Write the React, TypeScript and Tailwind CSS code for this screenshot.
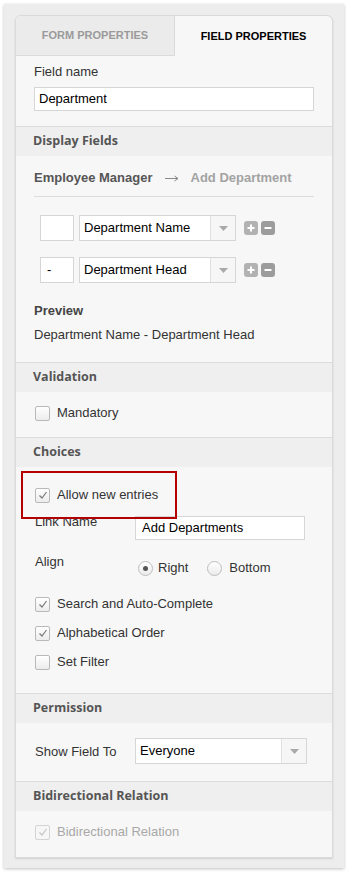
import React from "react";

const sans = { fontFamily: '"Liberation Sans", Arial, sans-serif' };
const heading = { fontFamily: '"Open Sans", "Liberation Sans", sans-serif' };

function CheckBox({ checked, disabled }: { checked?: boolean; disabled?: boolean }) {
  return (
    <span
      className={`flex h-[15px] w-[15px] shrink-0 items-center justify-center rounded-[2px] border ${
        disabled ? "border-[#d4d4d4] bg-[#f6f6f6]" : "border-[#b9b9b9] bg-gradient-to-b from-white to-[#ececec]"
      }`}
    >
      {checked ? (
        <svg width="10" height="10" viewBox="0 0 10 10">
          <path d="M1.5 5.5 L4 8 L8.5 2" fill="none" stroke={disabled ? "#c4c4c4" : "#7a7a7a"} strokeWidth="1.2" />
        </svg>
      ) : null}
    </span>
  );
}

function CheckRow({ label, checked, disabled }: { label: string; checked?: boolean; disabled?: boolean }) {
  return (
    <div className="flex h-[16px] items-center gap-[7px]">
      <CheckBox checked={checked} disabled={disabled} />
      <span className={`text-[13px] leading-[16px] ${disabled ? "text-[#a8a8a8]" : "text-[#333]"}`}>{label}</span>
    </div>
  );
}

function Radio({ selected }: { selected?: boolean }) {
  return (
    <span className="flex h-[15px] w-[15px] items-center justify-center rounded-full border border-[#bdbdbd] bg-gradient-to-b from-white to-[#ececec]">
      {selected ? <span className="h-[5px] w-[5px] rounded-full bg-[#555]" /> : null}
    </span>
  );
}

function Select({ value, width }: { value: string; width: string }) {
  return (
    <div className={`flex h-[26px] ${width} items-stretch border border-[#d6d6d6] bg-white`}>
      <span className="flex flex-1 items-center pl-[4px] text-[13px] text-black">{value}</span>
      <span className="flex w-[25px] items-center justify-center border-l border-[#e0e0e0] bg-[#f6f6f6]">
        <svg width="9" height="5" viewBox="0 0 9 5">
          <path d="M0 0 H9 L4.5 5 Z" fill="#a9a9a9" />
        </svg>
      </span>
    </div>
  );
}

function PlusMinus() {
  return (
    <div className="flex gap-[3px]">
      <span className="flex h-[14px] w-[14px] items-center justify-center rounded-[3px] bg-[#b2b2b2]">
        <svg width="8" height="8" viewBox="0 0 8 8">
          <path d="M4 0.5 V7.5 M0.5 4 H7.5" stroke="white" strokeWidth="2" />
        </svg>
      </span>
      <span className="flex h-[14px] w-[14px] items-center justify-center rounded-[3px] bg-[#9c9c9c]">
        <svg width="8" height="8" viewBox="0 0 8 8">
          <path d="M0.5 4 H7.5" stroke="white" strokeWidth="2" />
        </svg>
      </span>
    </div>
  );
}

function SectionHeader({ title }: { title: string }) {
  return (
    <div className="flex h-[30px] items-center border-t border-[#dcdcdc] bg-[#efefef] pl-[17px]">
      <span className="text-[12.5px] font-bold text-[#555]" style={heading}>
        {title}
      </span>
    </div>
  );
}

export default function App() {
  return (
    <div className="min-h-[873px] w-[349px] bg-white p-[4px]" style={sans}>
      <div className="h-[864px] w-[340px] bg-[#ededed] p-[11px] shadow-[0_1px_3px_rgba(0,0,0,0.25)]">
        <div className="relative h-[843px] w-[318px] rounded-t-[6px] border border-[#dadada] bg-[#f7f7f7] shadow-[0_1px_2px_rgba(0,0,0,0.12)]">
          {/* tabs */}
          <div className="flex h-[40px]">
            <div className="flex w-[159px] items-center justify-center rounded-tl-[6px] border-b border-r border-[#dadada] bg-[#ebebeb] text-[11px] font-bold text-[#9a9a9a]">
              FORM PROPERTIES
            </div>
            <div className="flex flex-1 items-center justify-center text-[11px] font-bold text-black">FIELD PROPERTIES</div>
          </div>

          {/* field name */}
          <div className="px-[18px] pb-[15px] pt-[8px]">
            <p className="text-[13px] leading-[16px] text-[#333]">Field name</p>
            <div className="mt-[7px] flex h-[24px] w-[280px] items-center border border-[#d6d6d6] bg-white pl-[4px] text-[13px] text-black">
              Department
            </div>
          </div>

          <SectionHeader title="Display Fields" />
          <div className="px-[18px] pb-[19px]">
            <div className="flex w-[280px] items-center border-b border-[#dcdcdc] pb-[10px] pt-[14px] text-[13px] font-bold leading-[16px]">
              <span className="text-[#555]">Employee Manager</span>
              <svg className="ml-[12px] mr-[12px]" width="14" height="7" viewBox="0 0 14 7">
                <path d="M0 3.5 H13 M9.5 1 L13 3.5 L9.5 6" fill="none" stroke="#8a8a8a" strokeWidth="1" />
              </svg>
              <span className="text-[#a3a3a3]">Add Department</span>
            </div>
            <div className="mt-[18px] flex items-center pl-[6px]">
              <div className="h-[26px] w-[34px] border border-[#d6d6d6] bg-white" />
              <div className="ml-[5px]">
                <Select value="Department Name" width="w-[157px]" />
              </div>
              <div className="ml-[8px]">
                <PlusMinus />
              </div>
            </div>
            <div className="mt-[16px] flex items-center pl-[6px]">
              <div className="flex h-[26px] w-[34px] items-center border border-[#d6d6d6] bg-white pl-[6px] text-[13px] text-black">-</div>
              <div className="ml-[5px]">
                <Select value="Department Head" width="w-[157px]" />
              </div>
              <div className="ml-[8px]">
                <PlusMinus />
              </div>
            </div>
            <p className="mt-[20px] text-[13px] font-bold leading-[16px] text-[#444]">Preview</p>
            <p className="mt-[8px] text-[13px] leading-[16px] text-[#333]">Department Name - Department Head</p>
          </div>

          <SectionHeader title="Validation" />
          <div className="px-[19px] pb-[16px] pt-[13px]">
            <CheckRow label="Mandatory" />
          </div>

          <SectionHeader title="Choices" />
          <div className="px-[19px] pb-[23px] pt-[20px]">
            <CheckRow label="Allow new entries" checked />
            <div className="mt-[11px] flex items-start">
              <span className="w-[100px] text-[13px] leading-[16px] text-[#333]">Link Name</span>
              <div className="mt-[2px] flex h-[24px] w-[170px] items-center border border-[#d6d6d6] bg-white pl-[6px] text-[13px] text-black">
                Add Departments
              </div>
            </div>
            <div className="mt-[13px] flex items-start">
              <span className="w-[100px] pt-[1px] text-[13px] leading-[16px] text-[#333]">Align</span>
              <div className="mt-[7px] flex items-center pl-[3px] text-[13px] leading-[16px] text-[#333]">
                <Radio selected />
                <span className="ml-[5px]">Right</span>
                <span className="ml-[19px]">
                  <Radio />
                </span>
                <span className="ml-[7px]">Bottom</span>
              </div>
            </div>
            <div className="mt-[20px] flex flex-col gap-[13px]">
              <CheckRow label="Search and Auto-Complete" checked />
              <CheckRow label="Alphabetical Order" checked />
              <CheckRow label="Set Filter" />
            </div>
          </div>

          <SectionHeader title="Permission" />
          <div className="flex items-center px-[19px] pb-[17px] pt-[15px]">
            <span className="w-[100px] pt-[2px] text-[13px] text-[#333]">Show Field To</span>
            <Select value="Everyone" width="w-[172px]" />
          </div>

          <SectionHeader title="Bidirectional Relation" />
          <div className="px-[19px] pt-[13px]">
            <CheckRow label="Bidirectional Relation" checked disabled />
          </div>

          {/* highlight annotation */}
          <div className="pointer-events-none absolute left-[5px] top-[455px] h-[48px] w-[156px] border-2 border-[#b30000]" />
        </div>
      </div>
    </div>
  );
}
